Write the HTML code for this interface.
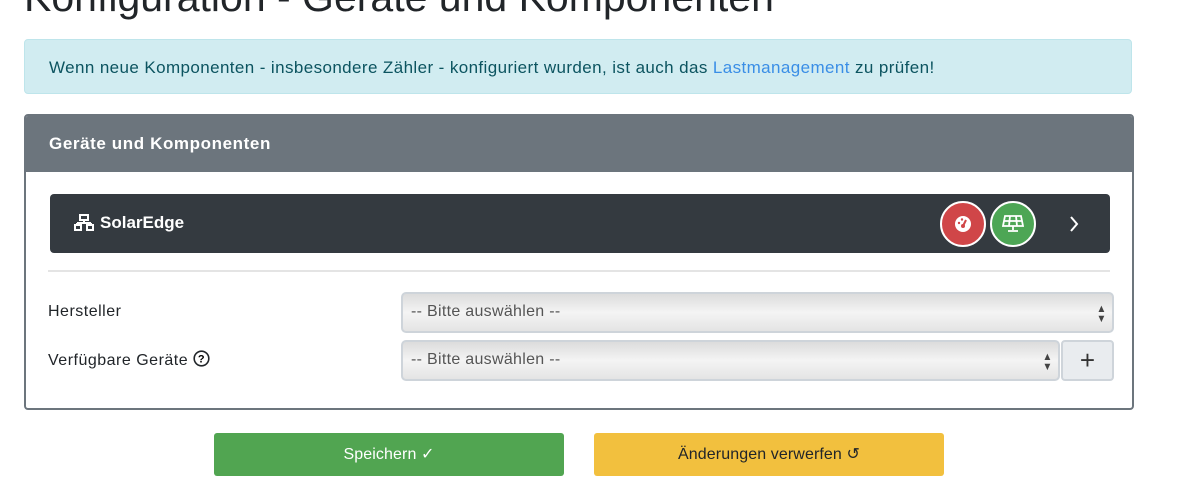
<!DOCTYPE html>
<html><head><meta charset="utf-8"><style>
body{margin:0;width:1180px;height:496px;overflow:hidden;background:#fff;font-family:"Liberation Sans",sans-serif;color:#212529;position:relative}
.abs{position:absolute}
h1{position:absolute;left:24px;top:-26px;margin:0;font-weight:400;font-size:41px;color:#212529;white-space:nowrap}
.alert{left:24px;top:39px;width:1108px;height:55px;background:#d1ecf1;border:1px solid #bee5eb;border-radius:4px;box-sizing:border-box;color:#0c5460;font-size:17px;letter-spacing:.4px;line-height:55px;padding-left:24px;white-space:nowrap}
.alert a{color:#3a8ee6;text-decoration:none}
.card{left:24px;top:114px;width:1110px;height:296px;border:2px solid #6c757d;border-radius:4px;box-sizing:border-box;overflow:hidden}
.ch{height:56px;background:#6c757d;color:#fff;font-weight:bold;font-size:17px;letter-spacing:.6px;line-height:56px;padding-left:23px}
.dark{left:50px;top:194px;width:1060px;height:59px;background:#343a40;border-radius:4px;color:#fff}
.sel{background:linear-gradient(#dcdcdc,#f4f4f4 50%,#e4e4e4);border:2px solid #ced4da;border-radius:5px;box-sizing:border-box;color:#555;font-size:16px;letter-spacing:.3px;line-height:36px;padding-left:8px}
.arr{position:absolute;right:5px;top:10px;font-size:11px;line-height:10px;color:#444;transform:scaleX(.9)}
.btn{top:433px;width:350px;height:43px;border-radius:3px;font-size:16px;letter-spacing:.1px;line-height:43px;text-align:center}
.lbl{font-size:16px;letter-spacing:.5px}
</style></head><body>
<h1>Konfiguration - Geräte und Komponenten</h1>
<div class="abs alert">Wenn neue Komponenten - insbesondere Zähler - konfiguriert wurden, ist auch das <a>Lastmanagement</a> zu prüfen!</div>
<div class="abs card"><div class="ch">Geräte und Komponenten</div></div>
<div class="abs dark">
<svg class="abs" style="left:24px;top:20px" width="20" height="17" viewBox="0 0 20 17" fill="none" stroke="#fff" stroke-width="2"><rect x="6" y="1" width="8" height="5"/><path d="M10 6v3M3 9h14M3 9v2M17 9v2"/><rect x="1" y="11" width="6" height="5"/><rect x="13" y="11" width="6" height="5"/></svg>
<div class="abs" style="left:50px;top:0;line-height:57px;font-weight:bold;font-size:17px">SolarEdge</div>
<div class="abs" style="left:890px;top:7px;width:42px;height:42px;border:2px solid #fff;border-radius:50%;background:#d04648;box-sizing:content-box"><svg style="position:absolute;left:12px;top:12px" width="18" height="18" viewBox="0 0 18 18"><circle cx="9" cy="9" r="8" fill="#fff"/><circle cx="9" cy="11" r="2" fill="#d04648"/><path d="M9 11l3-6" stroke="#d04648" stroke-width="2"/><circle cx="5" cy="8" r="1.2" fill="#d04648"/><circle cx="8" cy="4.5" r="1.2" fill="#d04648"/></svg></div>
<div class="abs" style="left:940px;top:7px;width:42px;height:42px;border:2px solid #fff;border-radius:50%;background:#4da655"><svg style="position:absolute;left:10px;top:11px" width="22" height="20" viewBox="0 0 22 20" fill="none" stroke="#fff" stroke-width="1.8"><path d="M3 2h16l2 10H1z M2 7h18 M8 2l-1 10 M14 2l1 10 M11 12v4 M6 17h10"/></svg></div>
<svg class="abs" style="left:1019px;top:22px" width="10" height="16" viewBox="0 0 10 16" fill="none" stroke="#fff" stroke-width="2"><path d="M2 1l6 7-6 7"/></svg>
</div>
<div class="abs" style="left:48px;top:270px;width:1062px;height:2px;background:#e4e4e4"></div>
<div class="abs lbl" style="left:48px;top:303px">Hersteller</div>
<div class="abs lbl" style="left:48px;top:350px">Verfügbare Geräte <svg width="17" height="17" viewBox="0 0 17 17" style="vertical-align:-2px"><circle cx="8.5" cy="8.5" r="7.3" fill="none" stroke="#212529" stroke-width="1.6"/><text x="8.5" y="12.5" font-size="11" font-weight="bold" text-anchor="middle" font-family="Liberation Sans">?</text></svg></div>
<div class="abs sel" style="left:401px;top:292px;width:713px;height:41px">-- Bitte auswählen --<span class="arr">▲<br>▼</span></div>
<div class="abs sel" style="left:401px;top:340px;width:659px;height:41px">-- Bitte auswählen --<span class="arr">▲<br>▼</span></div>
<div class="abs" style="left:1061px;top:340px;width:53px;height:41px;background:#e9ecef;border:2px solid #ced4da;border-radius:4px;box-sizing:border-box;text-align:center;font-size:26px;line-height:36px;color:#333">+</div>
<div class="abs btn" style="left:214px;background:#51a551;color:#fff">Speichern ✓</div>
<div class="abs btn" style="left:594px;background:#f2c03e;color:#212529">Änderungen verwerfen ↺</div>
</body></html>
